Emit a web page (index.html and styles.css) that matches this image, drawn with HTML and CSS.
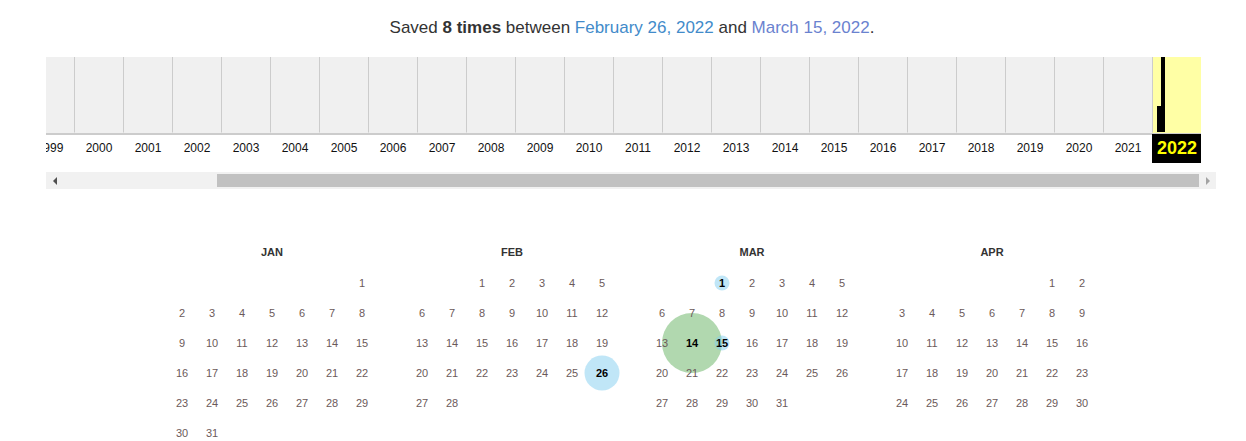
FILE: index.html
```html
<!DOCTYPE html>
<html lang="en">
<head>
<meta charset="utf-8">
<title>Wayback calendar</title>
<link rel="stylesheet" href="styles.css">
</head>
<body>
<div class="page">
  <div class="summary">Saved <b>8 times</b> between <a class="link" href="#">February 26, 2022</a> and <a class="link visited" href="#">March 15, 2022</a>.</div>

  <div class="timeline">
    <div class="sparkline">
      <div class="year"><div class="hist"></div><div class="label">1999</div></div>
      <div class="year"><div class="hist"></div><div class="label">2000</div></div>
      <div class="year"><div class="hist"></div><div class="label">2001</div></div>
      <div class="year"><div class="hist"></div><div class="label">2002</div></div>
      <div class="year"><div class="hist"></div><div class="label">2003</div></div>
      <div class="year"><div class="hist"></div><div class="label">2004</div></div>
      <div class="year"><div class="hist"></div><div class="label">2005</div></div>
      <div class="year"><div class="hist"></div><div class="label">2006</div></div>
      <div class="year"><div class="hist"></div><div class="label">2007</div></div>
      <div class="year"><div class="hist"></div><div class="label">2008</div></div>
      <div class="year"><div class="hist"></div><div class="label">2009</div></div>
      <div class="year"><div class="hist"></div><div class="label">2010</div></div>
      <div class="year"><div class="hist"></div><div class="label">2011</div></div>
      <div class="year"><div class="hist"></div><div class="label">2012</div></div>
      <div class="year"><div class="hist"></div><div class="label">2013</div></div>
      <div class="year"><div class="hist"></div><div class="label">2014</div></div>
      <div class="year"><div class="hist"></div><div class="label">2015</div></div>
      <div class="year"><div class="hist"></div><div class="label">2016</div></div>
      <div class="year"><div class="hist"></div><div class="label">2017</div></div>
      <div class="year"><div class="hist"></div><div class="label">2018</div></div>
      <div class="year"><div class="hist"></div><div class="label">2019</div></div>
      <div class="year"><div class="hist"></div><div class="label">2020</div></div>
      <div class="year"><div class="hist"></div><div class="label">2021</div></div>
      <div class="year current">
        <div class="hist">
          <div class="bar" style="height:0px"></div>
          <div class="bar" style="height:26px"></div>
          <div class="bar" style="height:75px"></div>
        </div>
        <div class="label">2022</div>
      </div>
    </div>
    <div class="scrollbar">
      <div class="arrow"><span class="tri-left"></span></div>
      <div class="track-space"></div>
      <div class="thumb"></div>
      <div class="arrow"><span class="tri-right"></span></div>
    </div>
  </div>

  <div class="calendar">
    <div class="month">
      <div class="month-title">JAN</div>
      <div class="days">
        <div class="day"></div><div class="day"></div><div class="day"></div><div class="day"></div><div class="day"></div><div class="day"></div>
        <div class="day"><span class="num">1</span></div>
        <div class="day"><span class="num">2</span></div><div class="day"><span class="num">3</span></div><div class="day"><span class="num">4</span></div><div class="day"><span class="num">5</span></div><div class="day"><span class="num">6</span></div><div class="day"><span class="num">7</span></div><div class="day"><span class="num">8</span></div>
        <div class="day"><span class="num">9</span></div><div class="day"><span class="num">10</span></div><div class="day"><span class="num">11</span></div><div class="day"><span class="num">12</span></div><div class="day"><span class="num">13</span></div><div class="day"><span class="num">14</span></div><div class="day"><span class="num">15</span></div>
        <div class="day"><span class="num">16</span></div><div class="day"><span class="num">17</span></div><div class="day"><span class="num">18</span></div><div class="day"><span class="num">19</span></div><div class="day"><span class="num">20</span></div><div class="day"><span class="num">21</span></div><div class="day"><span class="num">22</span></div>
        <div class="day"><span class="num">23</span></div><div class="day"><span class="num">24</span></div><div class="day"><span class="num">25</span></div><div class="day"><span class="num">26</span></div><div class="day"><span class="num">27</span></div><div class="day"><span class="num">28</span></div><div class="day"><span class="num">29</span></div>
        <div class="day"><span class="num">30</span></div><div class="day"><span class="num">31</span></div>
      </div>
    </div>

    <div class="month">
      <div class="month-title">FEB</div>
      <div class="days">
        <div class="day"></div><div class="day"></div>
        <div class="day"><span class="num">1</span></div><div class="day"><span class="num">2</span></div><div class="day"><span class="num">3</span></div><div class="day"><span class="num">4</span></div><div class="day"><span class="num">5</span></div>
        <div class="day"><span class="num">6</span></div><div class="day"><span class="num">7</span></div><div class="day"><span class="num">8</span></div><div class="day"><span class="num">9</span></div><div class="day"><span class="num">10</span></div><div class="day"><span class="num">11</span></div><div class="day"><span class="num">12</span></div>
        <div class="day"><span class="num">13</span></div><div class="day"><span class="num">14</span></div><div class="day"><span class="num">15</span></div><div class="day"><span class="num">16</span></div><div class="day"><span class="num">17</span></div><div class="day"><span class="num">18</span></div><div class="day"><span class="num">19</span></div>
        <div class="day"><span class="num">20</span></div><div class="day"><span class="num">21</span></div><div class="day"><span class="num">22</span></div><div class="day"><span class="num">23</span></div><div class="day"><span class="num">24</span></div><div class="day"><span class="num">25</span></div>
        <div class="day"><span class="dot blue" style="width:35px;height:35px"></span><span class="num captured">26</span></div>
        <div class="day"><span class="num">27</span></div><div class="day"><span class="num">28</span></div>
      </div>
    </div>

    <div class="month">
      <div class="month-title">MAR</div>
      <div class="days">
        <div class="day"></div><div class="day"></div>
        <div class="day"><span class="dot blue" style="width:15px;height:15px"></span><span class="num captured">1</span></div>
        <div class="day"><span class="num">2</span></div><div class="day"><span class="num">3</span></div><div class="day"><span class="num">4</span></div><div class="day"><span class="num">5</span></div>
        <div class="day"><span class="num">6</span></div><div class="day"><span class="num">7</span></div><div class="day"><span class="num">8</span></div><div class="day"><span class="num">9</span></div><div class="day"><span class="num">10</span></div><div class="day"><span class="num">11</span></div><div class="day"><span class="num">12</span></div>
        <div class="day"><span class="num">13</span></div>
        <div class="day"><span class="dot green" style="width:60px;height:60px"></span><span class="num captured">14</span></div>
        <div class="day"><span class="dot blue" style="width:15px;height:15px"></span><span class="num captured">15</span></div>
        <div class="day"><span class="num">16</span></div><div class="day"><span class="num">17</span></div><div class="day"><span class="num">18</span></div><div class="day"><span class="num">19</span></div>
        <div class="day"><span class="num">20</span></div><div class="day"><span class="num">21</span></div><div class="day"><span class="num">22</span></div><div class="day"><span class="num">23</span></div><div class="day"><span class="num">24</span></div><div class="day"><span class="num">25</span></div><div class="day"><span class="num">26</span></div>
        <div class="day"><span class="num">27</span></div><div class="day"><span class="num">28</span></div><div class="day"><span class="num">29</span></div><div class="day"><span class="num">30</span></div><div class="day"><span class="num">31</span></div>
      </div>
    </div>

    <div class="month">
      <div class="month-title">APR</div>
      <div class="days">
        <div class="day"></div><div class="day"></div><div class="day"></div><div class="day"></div><div class="day"></div>
        <div class="day"><span class="num">1</span></div><div class="day"><span class="num">2</span></div>
        <div class="day"><span class="num">3</span></div><div class="day"><span class="num">4</span></div><div class="day"><span class="num">5</span></div><div class="day"><span class="num">6</span></div><div class="day"><span class="num">7</span></div><div class="day"><span class="num">8</span></div><div class="day"><span class="num">9</span></div>
        <div class="day"><span class="num">10</span></div><div class="day"><span class="num">11</span></div><div class="day"><span class="num">12</span></div><div class="day"><span class="num">13</span></div><div class="day"><span class="num">14</span></div><div class="day"><span class="num">15</span></div><div class="day"><span class="num">16</span></div>
        <div class="day"><span class="num">17</span></div><div class="day"><span class="num">18</span></div><div class="day"><span class="num">19</span></div><div class="day"><span class="num">20</span></div><div class="day"><span class="num">21</span></div><div class="day"><span class="num">22</span></div><div class="day"><span class="num">23</span></div>
        <div class="day"><span class="num">24</span></div><div class="day"><span class="num">25</span></div><div class="day"><span class="num">26</span></div><div class="day"><span class="num">27</span></div><div class="day"><span class="num">28</span></div><div class="day"><span class="num">29</span></div><div class="day"><span class="num">30</span></div>
      </div>
    </div>
  </div>
</div>
</body>
</html>
```

FILE: styles.css
```css
html, body {
  margin: 0;
  background: #fff;
}

body {
  padding-left: 16px;
  font-family: "Liberation Sans", Arial, sans-serif;
  color: #333;
  overflow: hidden;
}

.page {
  width: 1230px;
}

.summary {
  box-sizing: border-box;
  height: 57px;
  padding-top: 18px;
  padding-left: 2px;
  font-size: 17px;
  line-height: 20px;
  text-align: center;
  color: #333;
}

.summary b {
  font-weight: bold;
}

.link {
  color: #428bca;
  text-decoration: none;
}

.link.visited {
  color: #6a82cf;
}

.timeline {
  width: 1170px;
  margin: 0 auto;
}

.sparkline {
  display: flex;
  justify-content: flex-end;
  overflow: hidden;
  padding-right: 15px;
}

.year {
  flex: 0 0 49px;
  width: 49px;
  display: flex;
  flex-direction: column;
}

.hist {
  box-sizing: border-box;
  height: 76px;
  background: #f0f0f0;
  border-left: 1px solid #ccc;
  border-bottom: 1px solid #fff0;
  display: flex;
  align-items: flex-end;
}

.year.current .hist {
  background: #ffffa5;
}

.bar {
  width: 4px;
  background: #000;
}

.label {
  box-sizing: border-box;
  height: 30px;
  border-top: 2px solid #ccc;
  padding-left: 1px;
  font-size: 12px;
  line-height: 27px;
  text-align: center;
  color: #111;
}

.year.current .label {
  background: #000;
  color: #ffff00;
  font-weight: bold;
  font-size: 18px;
  border-top: 1px solid #ccc;
  line-height: 28px;
}

.scrollbar {
  margin-top: 9px;
  height: 17px;
  background: #f1f1f1;
  display: flex;
  align-items: center;
}

.arrow {
  flex: 0 0 17px;
  height: 17px;
  display: flex;
  align-items: center;
  justify-content: center;
}

.tri-left {
  width: 0;
  height: 0;
  border-top: 4px solid transparent;
  border-bottom: 4px solid transparent;
  border-right: 4px solid #505050;
}

.tri-right {
  width: 0;
  height: 0;
  border-top: 4px solid transparent;
  border-bottom: 4px solid transparent;
  border-left: 4px solid #a3a3a3;
}

.track-space {
  flex: 1 1 auto;
}

.thumb {
  flex: 0 0 982px;
  height: 13px;
  background: #c1c1c1;
}

.calendar {
  display: flex;
  justify-content: center;
  gap: 30px;
  margin-top: 53px;
  padding-left: 2px;
}

.month {
  width: 210px;
}

.month-title {
  font-size: 11px;
  font-weight: bold;
  line-height: 20px;
  text-align: center;
  color: #333;
  margin-bottom: 6px;
}

.days {
  display: grid;
  grid-template-columns: repeat(7, 30px);
  grid-auto-rows: 30px;
}

.day {
  position: relative;
  display: flex;
  align-items: center;
  justify-content: center;
  font-size: 11px;
  color: #6b5a5a;
}

.num {
  position: relative;
  z-index: 1;
}

.num.captured {
  color: #000;
  font-weight: bold;
}

.dot {
  position: absolute;
  left: 50%;
  top: 50%;
  transform: translate(-50%, -50%);
  border-radius: 50%;
  z-index: 0;
}

.dot.blue {
  background: rgba(130, 205, 240, 0.5);
}

.dot.green {
  background: rgba(100, 178, 95, 0.5);
}
```
